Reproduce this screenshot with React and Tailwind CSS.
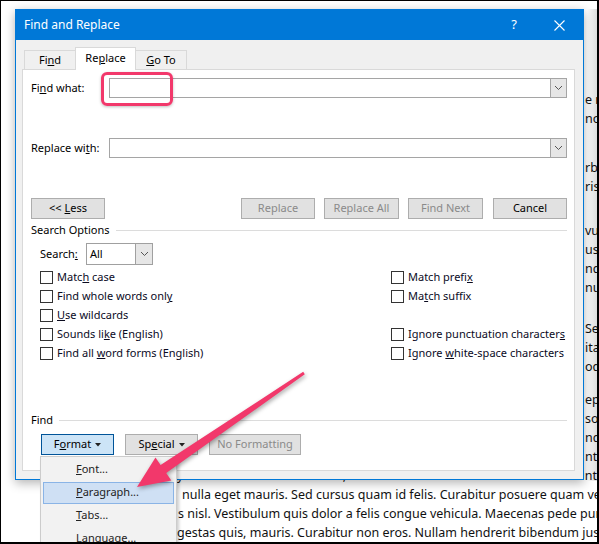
import React from 'react'

const UI = "font-['Noto_Sans',sans-serif]"

function Chevron() {
  return (
    <svg width="9" height="6" viewBox="0 0 9 6" aria-hidden="true">
      <path d="M1 1 L4.5 4.5 L8 1" stroke="#555" strokeWidth="1" fill="none" />
    </svg>
  )
}

function Caret() {
  return (
    <svg width="6" height="4" viewBox="0 0 6 4" aria-hidden="true" className="ml-[4px]">
      <path d="M0 0 H6 L3 3.5 Z" fill="#222" />
    </svg>
  )
}

function ComboInput() {
  return (
    <div className="flex h-[20px] flex-1 border border-[#a5a5a5] bg-white">
      <div className="flex-1" />
      <div className="flex w-[17px] items-center justify-center border border-[#a5a5a5] bg-[#e6e6e6] -my-px -mr-px">
        <Chevron />
      </div>
    </div>
  )
}

function Btn({ children, disabled, className = '' }) {
  return (
    <div
      className={`flex h-[21px] items-center justify-center border border-[#adadad] bg-[#e1e1e1] ${disabled ? 'text-[#8a8a8a]' : 'text-black'} ${className}`}
    >
      {children}
    </div>
  )
}

function Check({ children }) {
  return (
    <div className="flex h-[19px] items-center gap-[4px]">
      <span className="h-[13px] w-[13px] border border-[#333] bg-white" />
      <span className="text-[#0a0a1e]">{children}</span>
    </div>
  )
}

const MENU = [
  { key: 'F', rest: 'ont...' },
  { key: 'P', rest: 'aragraph...', active: true },
  { key: 'T', rest: 'abs...' },
  { key: 'L', rest: 'anguage...' },
]

export default function App() {
  return (
    <div className="relative h-[544px] w-[599px] overflow-hidden border-t border-l border-r-2 border-b-2 border-black bg-white">
      {/* document behind the dialog */}
      <div className="flex flex-col font-['Noto_Sans',sans-serif] text-[12.5px] leading-[19px] text-[#111] whitespace-nowrap">
        <div className="mt-[89px] h-[19px] pl-[584px]">e magna</div>
        <div className="h-[19px] pl-[584px]">nodo</div>
        <div className="mt-[30px] h-[19px] pl-[584px]">rbi tristique</div>
        <div className="h-[19px] pl-[584px]">risus</div>
        <div className="mt-[25px] h-[19px] pl-[584px]">vulputate</div>
        <div className="h-[19px] pl-[584px]">uscipit</div>
        <div className="h-[19px] pl-[584px]">nd</div>
        <div className="h-[19px] pl-[584px]">nulla</div>
        <div className="mt-[22px] h-[19px] pl-[584px]">Sed</div>
        <div className="h-[19px] pl-[584px]">itant</div>
        <div className="h-[19px] pl-[584px]">odio</div>
        <div className="mt-[14px] h-[19px] pl-[584px]">eptos</div>
        <div className="h-[19px] pl-[584px]">sociis</div>
        <div className="h-[19px] pl-[584px]">ndimentum</div>
        <div className="h-[19px] pl-[584px]">ntum</div>
        <div className="flex h-[19px] pl-[176px]">
          <span className="w-[406px] overflow-hidden">y diam urna accumsan lacus, sed interdum wisi nibh nec nisl. Ut tincidunt volutpat</span>
          <span className="ml-[2px]">dunt</span>
        </div>
        <div className="h-[19px] pl-[181px]">nulla eget mauris. Sed cursus quam id felis. Curabitur posuere quam vel nibh.</div>
        <div className="h-[19px] pl-[177px]">s nisl. Vestibulum quis dolor a felis congue vehicula. Maecenas pede purus,</div>
        <div className="h-[19px] pl-[176px]">gestas quis, mauris. Curabitur non eros. Nullam hendrerit bibendum justo,</div>
      </div>

      {/* soft shading at the right edge */}
      <div className="pointer-events-none absolute left-[586px] top-[8px] h-[472px] w-[11px] bg-gradient-to-r from-transparent to-black/15" />

      {/* dialog */}
      <div className={`absolute left-[14px] top-[8px] flex h-[471px] w-[569px] flex-col border border-[#0078d7] bg-[#f0f0f0] text-[11px] text-black shadow-[0_3px_10px_rgba(0,0,0,0.3)] ${UI}`}>
        <div className="flex h-[30px] items-center bg-[#0078d7] pl-[8px] text-[12px] text-white">
          <span>Find and Replace</span>
          <span className="ml-auto w-[14px] text-center text-[13px]">?</span>
          <svg width="11" height="11" viewBox="0 0 11 11" className="ml-[33px] mr-[18px]" aria-hidden="true">
            <path d="M0.5 0.5 L10.5 10.5 M10.5 0.5 L0.5 10.5" stroke="#fff" strokeWidth="1.1" />
          </svg>
        </div>

        <div className="flex flex-1 flex-col pb-[8px] pl-[6px] pr-[8px] pt-[7px]">
          {/* tabs */}
          <div className="flex h-[22px] items-end pl-[2px]">
            <div className="flex h-[19px] w-[52px] items-center justify-center border border-b-0 border-[#d9d9d9]">
              <span>Fi<u>n</u>d</span>
            </div>
            <div className="relative z-10 -mb-px -ml-px flex h-[23px] w-[61px] items-center justify-center border border-b-0 border-[#d9d9d9] bg-white pb-[2px]">
              <span>Re<u>p</u>lace</span>
            </div>
            <div className="-ml-px flex h-[19px] w-[52px] items-center justify-center border border-b-0 border-[#d9d9d9]">
              <span><u>G</u>o To</span>
            </div>
          </div>

          {/* tab panel */}
          <div className="flex flex-1 flex-col border border-[#d9d9d9] bg-white pl-[8px] pr-[7px]">
            <div className="mt-[8px] flex h-[20px] items-center">
              <span className="w-[78px]">Fi<u>n</u>d what:</span>
              <ComboInput />
            </div>
            <div className="mt-[40px] flex h-[20px] items-center">
              <span className="w-[78px]">Replace wi<u>t</u>h:</span>
              <ComboInput />
            </div>

            <div className="mt-[40px] flex items-center">
              <Btn className="w-[74px]">&lt;&lt; <u className="ml-[3px]">L</u>ess</Btn>
              <Btn disabled className="ml-auto w-[74px]">Replace</Btn>
              <Btn disabled className="ml-[9px] w-[75px]">Replace All</Btn>
              <Btn disabled className="ml-[9px] w-[75px]">Find Next</Btn>
              <Btn className="ml-[10px] w-[74px]">Cancel</Btn>
            </div>

            <div className="mt-[3px] flex h-[16px] items-center">
              <span>Search Options</span>
              <span className="ml-[6px] h-px flex-1 bg-[#dcdcdc]" />
            </div>

            <div className="mt-[5px] flex h-[22px] items-center pl-[9px]">
              <span className="w-[46px]">Search<u>:</u></span>
              <div className="flex h-[22px] w-[67px] border border-[#a0a0a0] bg-white">
                <span className="flex-1 pl-[3px] leading-[20px]">All</span>
                <div className="flex w-[17px] items-center justify-center border-l border-[#a0a0a0] bg-[#e6e6e6]">
                  <Chevron />
                </div>
              </div>
            </div>

            <div className="mt-[3px] grid grid-cols-[351px_1fr] pl-[9px]">
              <Check>Matc<u>h</u> case</Check>
              <Check>Match prefi<u>x</u></Check>
              <Check>Find whole words onl<u>y</u></Check>
              <Check>Ma<u>t</u>ch suffix</Check>
              <Check><u>U</u>se wildcards</Check>
              <div className="h-[19px]" />
              <Check>Sounds li<u>k</u>e (English)</Check>
              <Check>Ignore punctuation character<u>s</u></Check>
              <Check>Find all <u>w</u>ord forms (English)</Check>
              <Check>Ignore <u>w</u>hite-space characters</Check>
            </div>

            <div className="mt-[49px] flex h-[16px] items-center">
              <span>Find</span>
              <span className="ml-[6px] h-px flex-1 bg-[#dcdcdc]" />
            </div>

            <div className="mt-[6px] flex items-center pl-[10px]">
              <div className="flex h-[21px] w-[73px] items-center justify-center border border-[#005499] bg-[#cce4f7]">
                <span>F<u>o</u>rmat</span>
                <Caret />
              </div>
              <Btn className="ml-[11px] w-[73px]">
                <span>Sp<u>e</u>cial</span>
                <Caret />
              </Btn>
              <Btn disabled className="ml-[11px] w-[92px]">No Formatting</Btn>
            </div>
          </div>
        </div>
      </div>

      {/* Format dropdown menu */}
      <div className={`absolute left-[39px] top-[455px] w-[137px] border border-[#cccccc] bg-[#f2f2f2] pt-px text-[11px] text-[#222] shadow-[2px_2px_3px_rgba(0,0,0,0.2)] ${UI}`}>
        {MENU.map((item) => (
          <div key={item.key} className="flex h-[23px] items-center px-[2px]">
            <div
              className={`flex h-[22px] flex-1 items-center pl-[32px] ${item.active ? 'border border-[#8ab4e6] bg-[#cfe0f4]' : 'border border-transparent'}`}
            >
              <span><u>{item.key}</u>{item.rest}</span>
            </div>
          </div>
        ))}
      </div>

      {/* pink highlight around the Find what box */}
      <div className="pointer-events-none absolute left-[100px] top-[71px] h-[34px] w-[72px] rounded-[6px] border-[3px] border-[#f2386b] shadow-[0_1px_3px_rgba(0,0,0,0.25)]" />

      {/* pink arrow */}
      <svg
        className="pointer-events-none absolute -left-px -top-px drop-shadow-[1px_2px_2px_rgba(0,0,0,0.35)]"
        width="599"
        height="544"
        viewBox="0 0 599 544"
        aria-hidden="true"
      >
        <polygon
          points="137,487 155.5,457.4 160.6,464.9 303.2,371.8 304.8,374.2 166.2,473.1 171.3,480.6"
          fill="#f2386b"
        />
      </svg>
    </div>
  )
}
